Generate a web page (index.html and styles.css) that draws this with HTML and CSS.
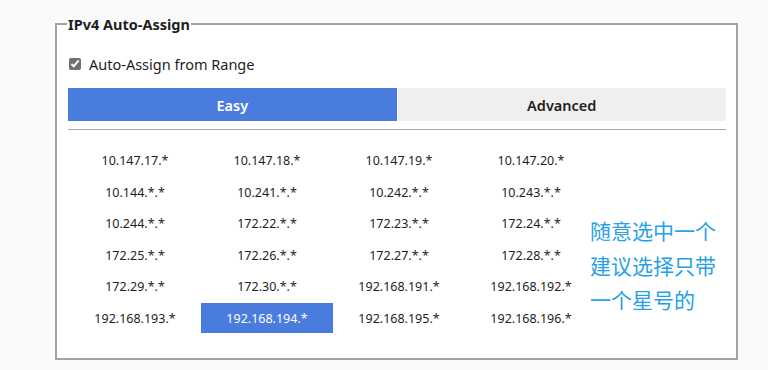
FILE: index.html
```html
<!DOCTYPE html>
<html lang="en">
  <head>
    <meta charset="UTF-8" />
    <title>IPv4 Auto-Assign</title>
    <link rel="stylesheet" href="styles.css">
  </head>
  <body>
    <main class="page">
      <fieldset class="assign">
        <legend>IPv4 Auto-Assign</legend>

        <label class="check-row">
          <input type="checkbox" checked />
          <span>Auto-Assign from Range</span>
        </label>

        <div class="tabs">
          <div class="tab active">Easy</div>
          <div class="tab">Advanced</div>
        </div>
        <hr class="divider" />

        <div class="ranges">
          <div class="grid">
            <div class="cell">10.147.17.*</div>
            <div class="cell">10.147.18.*</div>
            <div class="cell">10.147.19.*</div>
            <div class="cell">10.147.20.*</div>

            <div class="cell">10.144.*.*</div>
            <div class="cell">10.241.*.*</div>
            <div class="cell">10.242.*.*</div>
            <div class="cell">10.243.*.*</div>

            <div class="cell">10.244.*.*</div>
            <div class="cell">172.22.*.*</div>
            <div class="cell">172.23.*.*</div>
            <div class="cell">172.24.*.*</div>

            <div class="cell">172.25.*.*</div>
            <div class="cell">172.26.*.*</div>
            <div class="cell">172.27.*.*</div>
            <div class="cell">172.28.*.*</div>

            <div class="cell">172.29.*.*</div>
            <div class="cell">172.30.*.*</div>
            <div class="cell">192.168.191.*</div>
            <div class="cell">192.168.192.*</div>

            <div class="cell">192.168.193.*</div>
            <div class="cell selected">192.168.194.*</div>
            <div class="cell">192.168.195.*</div>
            <div class="cell">192.168.196.*</div>
          </div>

          <p class="note">随意选中一个<br />建议选择只带<br />一个星号的</p>
        </div>
      </fieldset>
    </main>
  </body>
</html>
```

FILE: styles.css
```css
:root {
  --blue: #4a7cdd;
  --text: #1e1e1e;
  --note: #27a1e6;
}

* {
  box-sizing: border-box;
}

body {
  margin: 0;
  background: #fafafa;
  font-family: "Noto Sans", "Open Sans", sans-serif;
  color: var(--text);
}

.page {
  padding: 14px 30px 0 55px;
}

.assign {
  width: 683px;
  margin: 0;
  padding: 0 10px 25px 11px;
  background: #fff;
  border: 2px solid #a2a2a2;
}

.assign legend {
  padding: 0 1px;
  margin-left: -1px;
  font-size: 14.5px;
  font-weight: 700;
  line-height: 20px;
}

.check-row {
  display: flex;
  align-items: center;
  gap: 8px;
  margin-top: 20px;
  height: 20px;
  font-size: 14.5px;
}

.check-row input {
  width: 12px;
  height: 12px;
  margin: 0 0 0 1px;
  accent-color: #707070;
}

.tabs {
  display: flex;
  margin-top: 14px;
  height: 33px;
}

.tab {
  flex: 1;
  display: flex;
  align-items: center;
  justify-content: center;
  background: #efefef;
  font-size: 14.5px;
  font-weight: 600;
}

.tab.active {
  background: var(--blue);
  color: #fff;
  margin-right: 1px;
}

.divider {
  margin: 8px 0 0;
  border: none;
  border-top: 1px solid #aaa;
}

.ranges {
  display: flex;
  align-items: flex-start;
  margin-top: 15px;
}

.grid {
  display: grid;
  grid-template-columns: repeat(4, 132px);
  grid-auto-rows: 30px;
  row-gap: 1.6px;
  margin-left: 1px;
}

.cell {
  display: flex;
  align-items: center;
  justify-content: center;
  padding-top: 1px;
  font-size: 12.5px;
}

.cell.selected {
  background: var(--blue);
  color: #fff;
}

.note {
  margin: 68px 0 0 -7px;
  color: var(--note);
  font-family: "Noto Sans CJK SC", sans-serif;
  font-size: 21px;
  line-height: 34.5px;
}
```
